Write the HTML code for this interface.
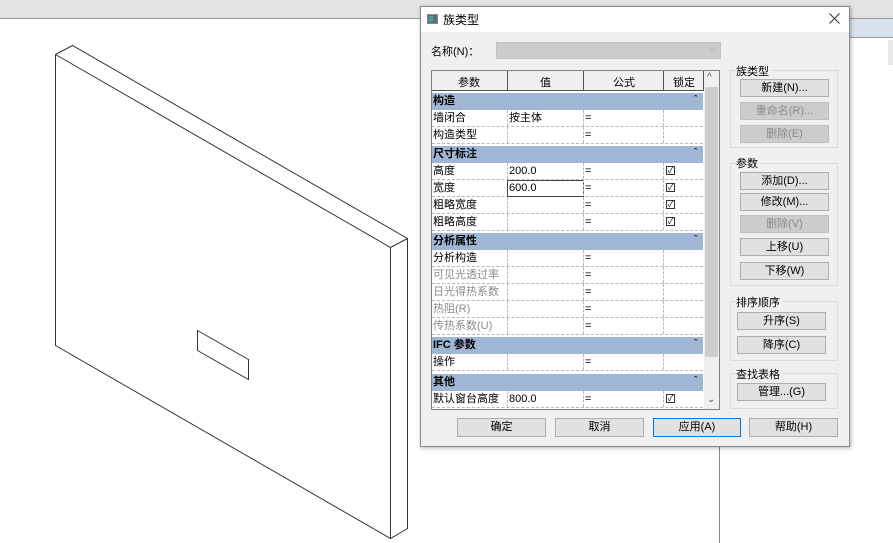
<!DOCTYPE html>
<html><head><meta charset="utf-8"><style>
*{box-sizing:border-box;margin:0;padding:0}
body{width:893px;height:543px;overflow:hidden;background:#fff;position:relative;font-family:"Liberation Sans","Noto Sans CJK SC",sans-serif;font-size:11px;color:#000}
.a{position:absolute}
.btn{position:absolute;background:#e1e1e1;border:1px solid #adadad;text-align:center;line-height:16px;font-size:11px;color:#000}
.dis{color:#8a8a8a;background:#cccccc;border-color:#bfbfbf}
.grp{position:absolute;border:1px solid #dcdcdc}
.lbl{position:absolute;background:#f0f0f0;font-size:11px;padding-right:2px}
.row{position:absolute;left:432px;width:271px;height:17px;background:#fff;border-bottom:1px dashed #b8b8b8}
.row span{position:absolute;top:1px;line-height:15px;font-size:11px}
.row i{position:absolute;top:0;height:16px;border-left:1px dashed #b8b8b8}
.hd{position:absolute;left:432px;width:271px;height:17px;background:#9fb7d4;font-weight:bold;font-size:11px;line-height:17px;padding-left:1px}
.hd b{position:absolute;right:6px;top:-2px;font-size:9px}
.g{color:#8c8c8c}
.ck{position:absolute;left:234px;top:3px;width:9px;height:9px;border:1px solid #333;font-size:8px;line-height:7px;text-align:center}
</style></head><body>
<div class="a" style="left:0;top:0;width:893px;height:19px;background:#e3e3e3;border-bottom:1px solid #9a9a9a"></div>
<div class="a" style="left:850px;top:19px;width:43px;height:19px;background:#d9e3ee;border-bottom:1px solid #999"></div>
<div class="a" style="left:888px;top:40px;width:5px;height:25px;background:#e8e8e8"></div>
<div class="a" style="left:719px;top:440px;width:1px;height:103px;background:#888"></div>
<svg class="a" style="left:0;top:0" width="893" height="543"><g fill="none" stroke="#333" stroke-width="1">
<path d="M55.5 54.5 L72.5 45.5 L407.5 238.5 L407.5 528.5 L390.5 538.5 L55.5 345.5 Z"/>
<path d="M55.5 54.5 L390.5 247.5 L407.5 238.5 M390.5 247.5 L390.5 538.5"/>
<path d="M197.5 330.5 L248.5 359.5 L248.5 379.5 L197.5 350.5 Z"/></g></svg>

<div class="a" style="left:420px;top:6px;width:430px;height:441px;background:#f0f0f0;border:1px solid #8a8a8a;box-shadow:1px 1px 4px rgba(0,0,0,.3)"></div>
<div class="a" style="left:421px;top:7px;width:428px;height:25px;background:#fff"></div>
<div class="a" style="left:427px;top:14px;width:11px;height:10px;background:#5b6b7b;border:1px solid #888"><div style="position:absolute;left:1px;top:1px;width:4px;height:6px;background:#4aa38a"></div></div>
<div class="a" style="left:443px;top:11px;font-size:12px">族类型</div>
<svg class="a" style="left:829px;top:13px" width="11" height="11"><path d="M0.5 0.5 L10.5 10.5 M10.5 0.5 L0.5 10.5" stroke="#333" stroke-width="1"/></svg>
<div class="a" style="left:431px;top:43px;font-size:11px">名称(N)：</div>
<div class="a" style="left:496px;top:42px;width:225px;height:17px;background:#cccccc;border:1px solid #c4c4c4"><span style="position:absolute;right:4px;top:0;font-size:9px;color:#999">⌵</span></div>

<div class="a" style="left:431px;top:70px;width:289px;height:340px;border:1px solid #828282;background:#fff"></div>
<div class="a" style="left:432px;top:71px;width:271px;height:20px;background:#f0f0f0;border-bottom:1px solid #555"></div>
<div class="a" style="left:507px;top:71px;width:1px;height:20px;background:#555"></div>
<div class="a" style="left:583px;top:71px;width:1px;height:20px;background:#555"></div>
<div class="a" style="left:663px;top:71px;width:1px;height:20px;background:#555"></div>
<div class="a" style="left:703px;top:71px;width:1px;height:20px;background:#555"></div>
<div class="a" style="left:458px;top:74px">参数</div>
<div class="a" style="left:540px;top:74px">值</div>
<div class="a" style="left:613px;top:74px">公式</div>
<div class="a" style="left:673px;top:74px">锁定</div>
<div class="a" style="left:704px;top:71px;width:15px;height:338px;background:#f0f0f0"></div>
<div class="a" style="left:705px;top:87px;width:13px;height:270px;background:#cdcdcd"></div>
<div class="a" style="left:707px;top:72px;font-size:10px;color:#555">^</div>
<div class="a" style="left:707px;top:394px;font-size:10px;color:#555">⌄</div>

<div class="hd" style="top:93px">构造<b>ˆ</b></div>
<div class="row" style="top:110px"><span style="left:1px">墙闭合</span><i style="left:75px"></i><span style="left:77px">按主体</span><i style="left:151px"></i><span style="left:153px">=</span><i style="left:231px"></i></div>
<div class="row" style="top:127px"><span style="left:1px">构造类型</span><i style="left:75px"></i><i style="left:151px"></i><span style="left:153px">=</span><i style="left:231px"></i></div>
<div class="hd" style="top:146px">尺寸标注<b>ˆ</b></div>
<div class="row" style="top:163px"><span style="left:1px">高度</span><i style="left:75px"></i><span style="left:77px">200.0</span><i style="left:151px"></i><span style="left:153px">=</span><i style="left:231px"></i><div class="ck">✓</div></div>
<div class="row" style="top:180px"><span style="left:1px">宽度</span><i style="left:75px"></i><div style="position:absolute;left:75px;top:0;width:77px;height:17px;border:1px solid #444"></div><span style="left:77px">600.0</span><i style="left:151px"></i><span style="left:153px">=</span><i style="left:231px"></i><div class="ck">✓</div></div>
<div class="row" style="top:197px"><span style="left:1px">粗略宽度</span><i style="left:75px"></i><i style="left:151px"></i><span style="left:153px">=</span><i style="left:231px"></i><div class="ck">✓</div></div>
<div class="row" style="top:214px"><span style="left:1px">粗略高度</span><i style="left:75px"></i><i style="left:151px"></i><span style="left:153px">=</span><i style="left:231px"></i><div class="ck">✓</div></div>
<div class="hd" style="top:233px">分析属性<b>ˆ</b></div>
<div class="row" style="top:250px"><span style="left:1px">分析构造</span><i style="left:75px"></i><i style="left:151px"></i><span style="left:153px">=</span><i style="left:231px"></i></div>
<div class="row" style="top:267px"><span class="g" style="left:1px">可见光透过率</span><i style="left:75px"></i><i style="left:151px"></i><span style="left:153px">=</span><i style="left:231px"></i></div>
<div class="row" style="top:284px"><span class="g" style="left:1px">日光得热系数</span><i style="left:75px"></i><i style="left:151px"></i><span style="left:153px">=</span><i style="left:231px"></i></div>
<div class="row" style="top:301px"><span class="g" style="left:1px">热阻(R)</span><i style="left:75px"></i><i style="left:151px"></i><span style="left:153px">=</span><i style="left:231px"></i></div>
<div class="row" style="top:318px"><span class="g" style="left:1px">传热系数(U)</span><i style="left:75px"></i><i style="left:151px"></i><span style="left:153px">=</span><i style="left:231px"></i></div>
<div class="hd" style="top:337px">IFC 参数<b>ˆ</b></div>
<div class="row" style="top:354px"><span style="left:1px">操作</span><i style="left:75px"></i><i style="left:151px"></i><span style="left:153px">=</span><i style="left:231px"></i></div>
<div class="hd" style="top:374px">其他<b>ˆ</b></div>
<div class="row" style="top:391px"><span style="left:1px">默认窗台高度</span><i style="left:75px"></i><span style="left:77px">800.0</span><i style="left:151px"></i><span style="left:153px">=</span><i style="left:231px"></i><div class="ck">✓</div></div>

<div class="grp" style="left:730px;top:70px;width:108px;height:78px"></div>
<div class="lbl" style="left:736px;top:63px">族类型</div>
<div class="btn" style="left:740px;top:79px;width:89px;height:18px">新建(N)...</div>
<div class="btn dis" style="left:740px;top:102px;width:89px;height:18px">重命名(R)...</div>
<div class="btn dis" style="left:740px;top:125px;width:89px;height:18px">删除(E)</div>
<div class="grp" style="left:730px;top:163px;width:108px;height:123px"></div>
<div class="lbl" style="left:736px;top:155px">参数</div>
<div class="btn" style="left:740px;top:172px;width:89px;height:18px">添加(D)...</div>
<div class="btn" style="left:740px;top:193px;width:89px;height:18px">修改(M)...</div>
<div class="btn dis" style="left:740px;top:215px;width:89px;height:18px">删除(V)</div>
<div class="btn" style="left:740px;top:238px;width:89px;height:18px">上移(U)</div>
<div class="btn" style="left:740px;top:262px;width:89px;height:18px">下移(W)</div>
<div class="grp" style="left:730px;top:301px;width:108px;height:60px"></div>
<div class="lbl" style="left:736px;top:294px">排序顺序</div>
<div class="btn" style="left:737px;top:312px;width:89px;height:18px">升序(S)</div>
<div class="btn" style="left:737px;top:336px;width:89px;height:18px">降序(C)</div>
<div class="grp" style="left:730px;top:373px;width:108px;height:36px"></div>
<div class="lbl" style="left:736px;top:366px">查找表格</div>
<div class="btn" style="left:737px;top:383px;width:89px;height:18px">管理...(G)</div>

<div class="btn" style="left:457px;top:418px;width:89px;height:19px;line-height:17px">确定</div>
<div class="btn" style="left:555px;top:418px;width:89px;height:19px;line-height:17px">取消</div>
<div class="btn" style="left:653px;top:418px;width:88px;height:19px;line-height:17px;border:1px solid #0078d7">应用(A)</div>
<div class="btn" style="left:749px;top:418px;width:89px;height:19px;line-height:17px">帮助(H)</div>
</body></html>
